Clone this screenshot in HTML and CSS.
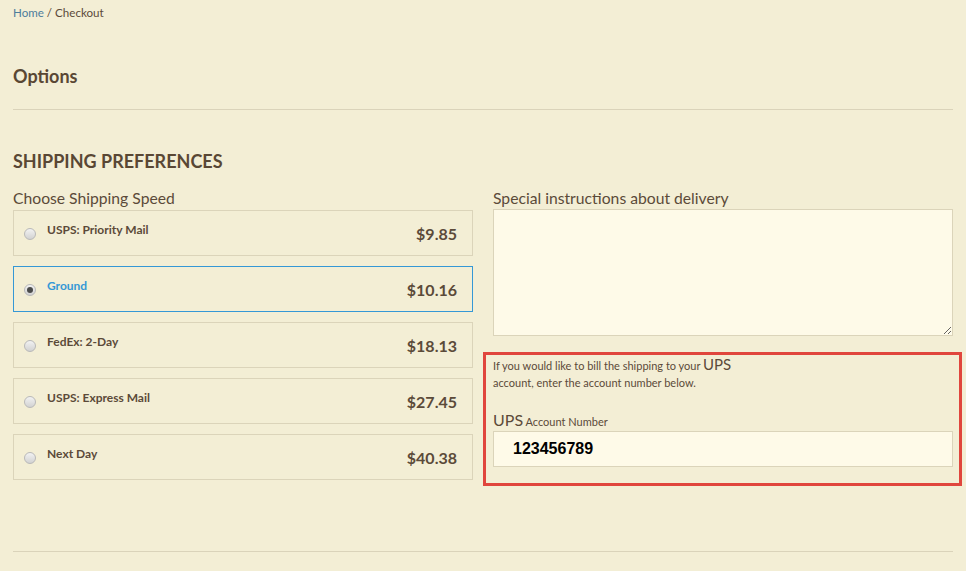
FILE: index.html
```html
<!DOCTYPE html>
<html lang="en">
  <head>
    <meta charset="UTF-8" />
    <meta name="viewport" content="width=device-width, initial-scale=1.0" />
    <title>Checkout</title>
    <link rel="stylesheet" href="styles.css">
  </head>
  <body>
    <div class="page">
      <div class="breadcrumb">
        <a href="#">Home</a> / Checkout
      </div>

      <h2 class="options-title">Options</h2>
      <hr class="divider" />

      <h3 class="section-title">SHIPPING PREFERENCES</h3>

      <div class="columns">
        <div class="column">
          <label class="field-label">Choose Shipping Speed</label>
          <div class="ship-list">
            <div class="ship-option">
              <span class="radio"></span>
              <span class="ship-name">USPS: Priority Mail</span>
              <span class="ship-price">$9.85</span>
            </div>
            <div class="ship-option selected">
              <span class="radio checked"></span>
              <span class="ship-name">Ground</span>
              <span class="ship-price">$10.16</span>
            </div>
            <div class="ship-option">
              <span class="radio"></span>
              <span class="ship-name">FedEx: 2-Day</span>
              <span class="ship-price">$18.13</span>
            </div>
            <div class="ship-option">
              <span class="radio"></span>
              <span class="ship-name">USPS: Express Mail</span>
              <span class="ship-price">$27.45</span>
            </div>
            <div class="ship-option">
              <span class="radio"></span>
              <span class="ship-name">Next Day</span>
              <span class="ship-price">$40.38</span>
            </div>
          </div>
        </div>

        <div class="column">
          <label class="field-label">Special instructions about delivery</label>
          <textarea class="instructions"></textarea>

          <div class="ups-box">
            <p class="ups-note">
              If you would like to bill the shipping to your <span class="ups-big">UPS</span><br />
              account, enter the account number below.
            </p>
            <label class="ups-label"><span class="ups-big">UPS</span> Account Number</label>
            <input class="ups-input" type="text" value="123456789" />
          </div>
        </div>
      </div>

      <hr class="divider bottom" />
    </div>
  </body>
</html>
```

FILE: styles.css
```css
body {
  margin: 0;
  background-color: #f3eed5;
  font-family: Lato, "Open Sans", sans-serif;
  color: #5b4a39;
}

.page {
  width: 940px;
  margin-left: 13px;
}

.breadcrumb {
  font-size: 11.6px;
  line-height: 18px;
  padding-top: 4px;
}

.breadcrumb a {
  color: #4d7d9c;
  text-decoration: none;
}

.options-title {
  margin: 42px 0 0;
  font-size: 18px;
  line-height: 24px;
  font-weight: bold;
  color: #594734;
}

.divider {
  margin: 21px 0 0;
  border: none;
  border-top: 1px solid #dad3ba;
  height: 0;
}

.divider.bottom {
  margin-top: 65px;
}

.section-title {
  margin: 39px 0 0;
  font-size: 18px;
  line-height: 24px;
  font-weight: bold;
  color: #594734;
}

.columns {
  display: flex;
  gap: 20px;
  margin-top: 15px;
}

.column {
  width: 460px;
  display: flex;
  flex-direction: column;
}

.field-label {
  font-size: 15.7px;
  line-height: 20px;
  margin-bottom: 2px;
}

.ship-list {
  display: flex;
  flex-direction: column;
  gap: 10px;
}

.ship-option {
  display: flex;
  align-items: center;
  height: 44px;
  padding: 0 15px 0 10px;
  border: 1px solid #dbd4ba;
}

.ship-option.selected {
  border-color: #3598d6;
}

.radio {
  width: 10px;
  height: 10px;
  border-radius: 50%;
  border: 1px solid #b9b9b9;
  background: linear-gradient(#f2f2f2, #d2d2d2);
  margin-top: 2px;
  position: relative;
}

.radio.checked::after {
  content: "";
  position: absolute;
  left: 2px;
  top: 2px;
  width: 6px;
  height: 6px;
  border-radius: 50%;
  background: #4a4a4a;
}

.ship-name {
  margin-left: 11px;
  margin-bottom: 7px;
  font-size: 12px;
  font-weight: bold;
  line-height: 16px;
}

.selected .ship-name {
  color: #3598d6;
}

.ship-price {
  margin-left: auto;
  margin-top: 1px;
  font-size: 16px;
  font-weight: bold;
}

.instructions {
  box-sizing: border-box;
  width: 460px;
  height: 127px;
  margin: -1px 0 0;
  border: 1px solid #dbd4ba;
  background-color: #fefae8;
  resize: vertical;
}

.ups-box {
  margin: 16px -9px 0 -10px;
  padding: 1px 6px 16px 7px;
  border: 3px solid #e0463d;
}

.ups-note {
  margin: 0;
  font-size: 11px;
  line-height: 17px;
}

.ups-big {
  font-size: 15px;
}

.ups-label {
  display: block;
  margin-top: 20px;
  font-size: 11px;
  line-height: 18px;
}

.ups-label .ups-big {
  font-size: 16px;
}

.ups-input {
  box-sizing: border-box;
  width: 460px;
  height: 36px;
  margin-top: 0;
  padding: 0 0 0 19px;
  border: 1px solid #dbd4ba;
  background-color: #fefae8;
  font-family: "Liberation Sans", Arial, sans-serif;
  font-size: 16px;
  font-weight: bold;
  color: #000;
}
```
